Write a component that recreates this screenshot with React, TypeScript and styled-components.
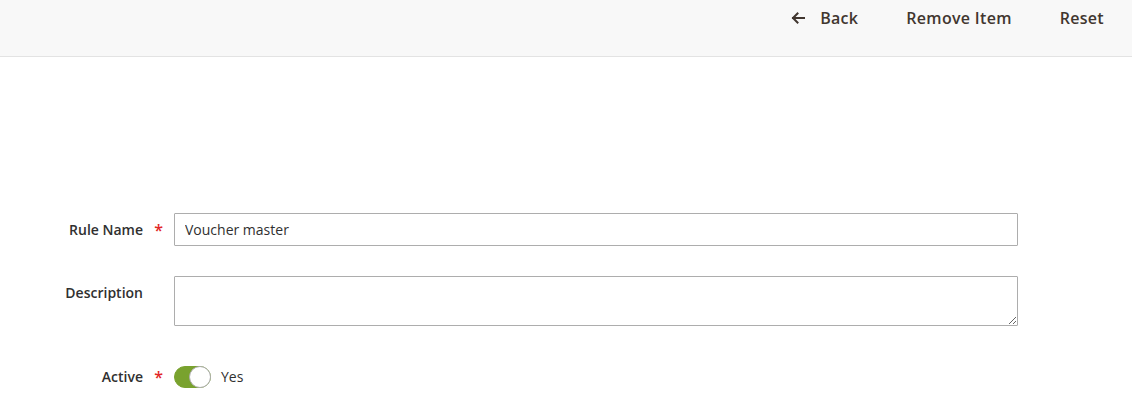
import React from "react";
import styled, { createGlobalStyle } from "styled-components";

const GlobalStyle = createGlobalStyle`
  html, body { margin: 0; padding: 0; background: #ffffff; }
  body { font-family: "Open Sans", "Liberation Sans", sans-serif; color: #303030; }
  * { box-sizing: border-box; }
`;

const Page = styled.div`
  width: 1132px;
  min-height: 415px;
  background: #fff;
`;

const Header = styled.header`
  height: 57px;
  background: #f8f8f8;
  border-bottom: 1px solid #e3e3e3;
  display: flex;
  justify-content: flex-end;
  align-items: flex-start;
  padding: 7px 28px 0 0;
  gap: 48px;
`;

const ActionButton = styled.button`
  display: flex;
  align-items: center;
  gap: 15px;
  border: none;
  background: transparent;
  padding: 0;
  font-family: "Open Sans", "Liberation Sans", sans-serif;
  font-size: 16px;
  letter-spacing: 0.3px;
  font-weight: 600;
  color: #41362f;
  line-height: 22px;
  cursor: pointer;
`;

const Form = styled.form`
  padding-top: 156px;
  display: flex;
  flex-direction: column;
`;

const Row = styled.div<{ $mb: number }>`
  display: flex;
  align-items: flex-start;
  margin-bottom: ${(p) => p.$mb}px;
`;

const Label = styled.label<{ $required?: boolean }>`
  position: relative;
  width: 174px;
  padding-right: 31px;
  text-align: right;
  font-size: 14px;
  font-weight: 600;
  line-height: 33px;
  color: #303030;
  &::after {
    content: ${(p) => (p.$required ? '"*"' : "none")};
    position: absolute;
    right: 11px;
    top: 1px;
    color: #e22626;
    font-size: 16px;
    font-weight: 600;
  }
`;

const TextInput = styled.input`
  width: 844px;
  height: 33px;
  border: 1px solid #adadad;
  border-radius: 1px;
  padding: 0 10px;
  font-family: "Open Sans", "Liberation Sans", sans-serif;
  font-size: 14px;
  color: #303030;
  background: #fff;
  outline: none;
`;

const TextArea = styled.textarea`
  width: 844px;
  height: 50px;
  border: 1px solid #adadad;
  border-radius: 1px;
  padding: 6px 10px;
  font-family: "Open Sans", "Liberation Sans", sans-serif;
  font-size: 14px;
  color: #303030;
  background: #fff;
  outline: none;
  resize: both;
  display: block;
`;

const SwitchWrap = styled.div`
  display: flex;
  align-items: center;
  height: 33px;
  gap: 10px;
`;

const Track = styled.span<{ $on: boolean }>`
  position: relative;
  display: inline-block;
  width: 37px;
  height: 22px;
  border-radius: 12px;
  background: ${(p) => (p.$on ? "#79a22e" : "#e3e3e3")};
  border: 1px solid ${(p) => (p.$on ? "#79a22e" : "#adadad")};
`;

const Knob = styled.span<{ $on: boolean }>`
  position: absolute;
  top: -1px;
  left: ${(p) => (p.$on ? "14px" : "-1px")};
  width: 22px;
  height: 22px;
  border-radius: 50%;
  background: #fff;
  border: 1px solid #adadad;
`;

const SwitchText = styled.span`
  font-size: 14px;
  color: #303030;
`;

const ArrowLeft = () => (
  <svg width="14" height="12" viewBox="0 0 14 12" fill="none">
    <path d="M13 6H2M6.5 1.5L2 6l4.5 4.5" stroke="#41362f" strokeWidth="2" strokeLinecap="square" />
  </svg>
);

export default function App() {
  return (
    <Page>
      <GlobalStyle />
      <Header>
        <ActionButton type="button">
          <ArrowLeft />
          Back
        </ActionButton>
        <ActionButton type="button">Remove Item</ActionButton>
        <ActionButton type="button">Reset</ActionButton>
      </Header>
      <Form>
        <Row $mb={30}>
          <Label $required>Rule Name</Label>
          <TextInput defaultValue="Voucher master" />
        </Row>
        <Row $mb={34}>
          <Label>Description</Label>
          <TextArea />
        </Row>
        <Row $mb={0}>
          <Label $required>Active</Label>
          <SwitchWrap>
            <Track $on>
              <Knob $on />
            </Track>
            <SwitchText>Yes</SwitchText>
          </SwitchWrap>
        </Row>
      </Form>
    </Page>
  );
}
